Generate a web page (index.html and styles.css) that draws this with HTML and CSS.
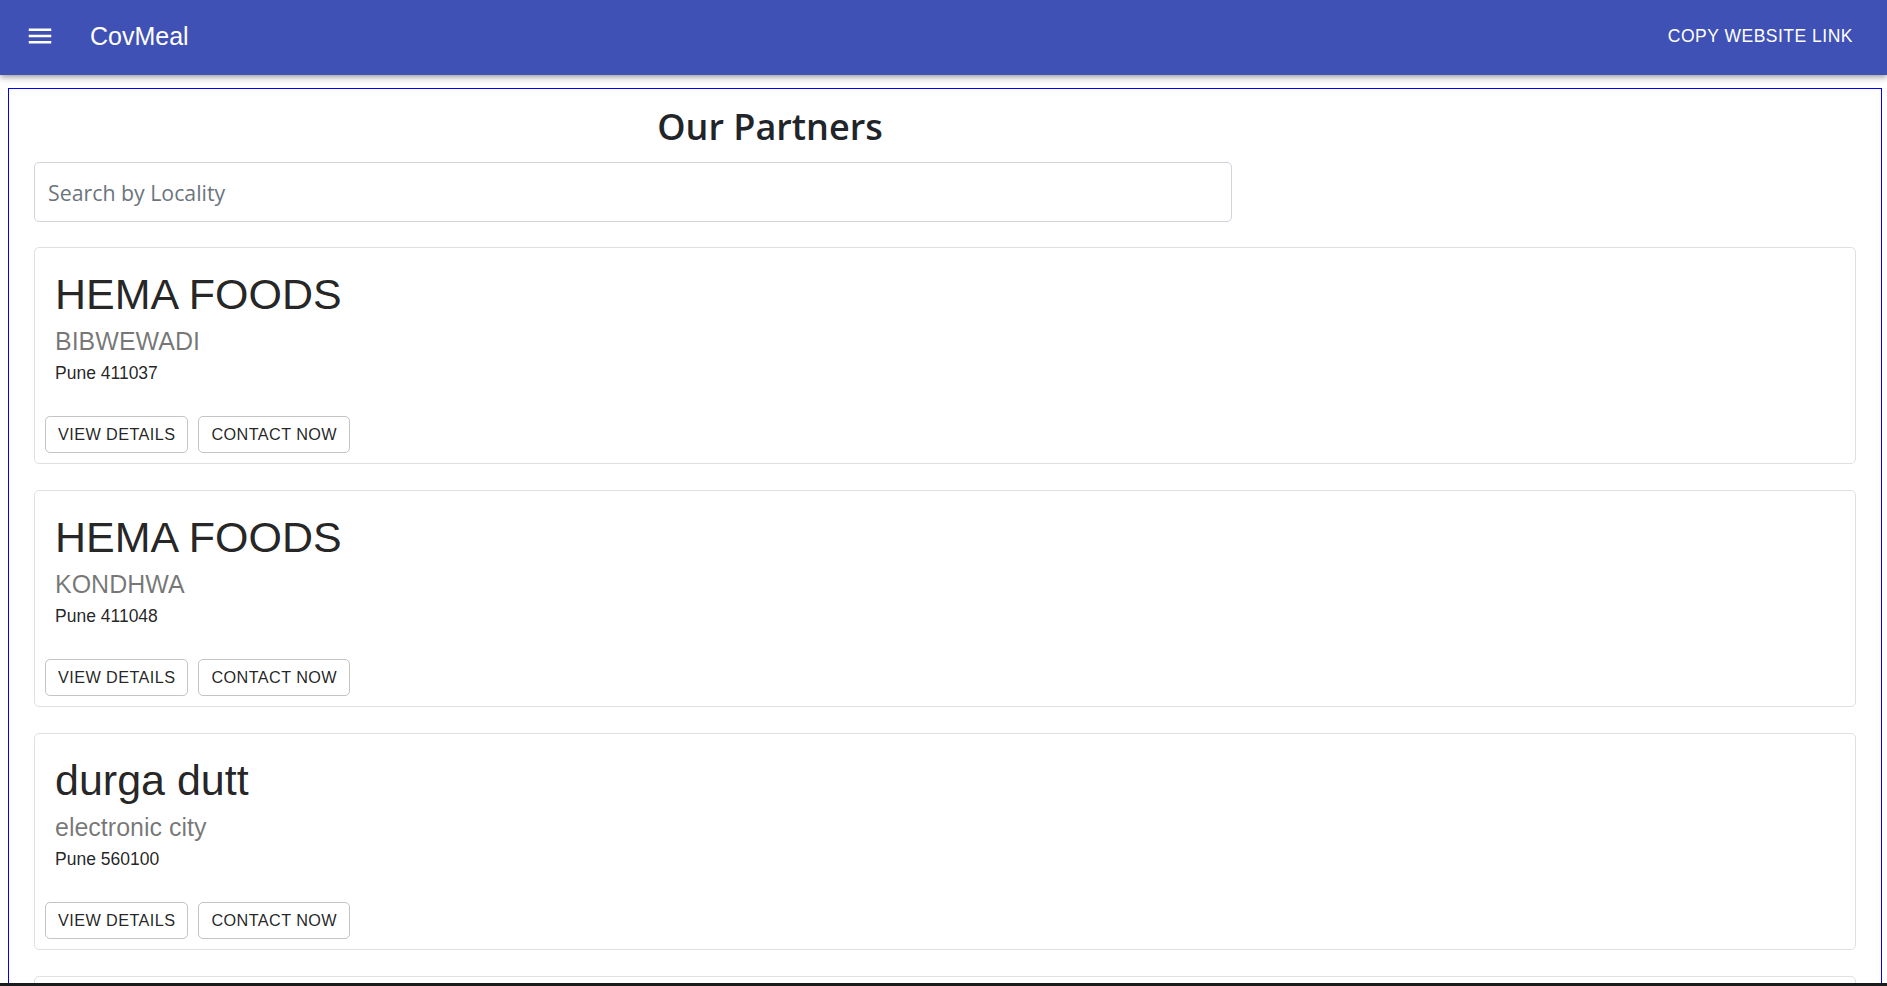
FILE: index.html
```html
<!DOCTYPE html>
<html lang="en">
  <head>
    <meta charset="UTF-8" />
    <meta name="viewport" content="width=device-width, initial-scale=1.0" />
    <title>CovMeal</title>
    <link rel="stylesheet" href="styles.css">
  </head>
  <body>
    <header class="appbar">
      <button class="menu-btn" aria-label="menu">
        <svg viewBox="0 0 24 24" width="30" height="30"><path fill="#fff" d="M3 18h18v-2H3v2zm0-5h18v-2H3v2zm0-7v2h18V6H3z"/></svg>
      </button>
      <h6 class="brand">CovMeal</h6>
      <button class="copy-btn">Copy Website Link</button>
    </header>

    <main class="container">
      <div class="top">
        <h3 class="page-title">Our Partners</h3>
      </div>
      <input class="search" type="text" placeholder="Search by Locality" />

      <div class="partners">
        <article class="card">
          <div class="card__content">
            <h4 class="card__name">HEMA FOODS</h4>
            <h6 class="card__area">BIBWEWADI</h6>
            <p class="card__city">Pune 411037</p>
          </div>
          <div class="card__actions">
            <button class="btn-outline">View Details</button>
            <button class="btn-outline">Contact Now</button>
          </div>
        </article>

        <article class="card">
          <div class="card__content">
            <h4 class="card__name">HEMA FOODS</h4>
            <h6 class="card__area">KONDHWA</h6>
            <p class="card__city">Pune 411048</p>
          </div>
          <div class="card__actions">
            <button class="btn-outline">View Details</button>
            <button class="btn-outline">Contact Now</button>
          </div>
        </article>

        <article class="card">
          <div class="card__content">
            <h4 class="card__name">durga dutt</h4>
            <h6 class="card__area">electronic city</h6>
            <p class="card__city">Pune 560100</p>
          </div>
          <div class="card__actions">
            <button class="btn-outline">View Details</button>
            <button class="btn-outline">Contact Now</button>
          </div>
        </article>

        <!-- next card, still loading -->
        <article class="card card--empty"></article>
      </div>
    </main>
    <div class="window-edge"></div>
  </body>
</html>
```

FILE: styles.css
```css
body {
  margin: 0;
  font-family: "Liberation Sans", Arial, sans-serif;
  background: #fff;
}

/* top bar */
.appbar {
  height: 75px;
  box-sizing: border-box;
  padding: 0 34px 4px 25px;
  display: flex;
  align-items: center;
  background-color: #3f51b5;
  color: white;
  box-shadow: 0px 2px 4px -1px rgba(0,0,0,0.2), 0px 4px 5px 0px rgba(0,0,0,0.14), 0px 1px 10px 0px rgba(0,0,0,0.12);
}
.menu-btn {
  border: none;
  background: none;
  padding: 0;
  width: 30px;
  height: 30px;
  display: flex;
  cursor: pointer;
}
.brand {
  margin: 0 0 0 35px;
  font-size: 25px;
  font-weight: 400;
  line-height: 40px;
  flex: 1;
}
.copy-btn {
  border: none;
  background: none;
  padding: 0;
  color: white;
  font-family: inherit;
  font-size: 17.5px;
  line-height: 30px;
  letter-spacing: 0.5px;
  text-transform: uppercase;
  cursor: pointer;
}

/* page */
.container {
  margin: 13px 5px 0 8px;
  border: 1px solid blue;
  border-bottom: none;
  padding: 0 25px;
}
.top {
  width: 1472px;
  text-align: center;
}
.page-title {
  margin: 17px 0 14px;
  font-family: "Open Sans", "Segoe UI", sans-serif;
  font-size: 36px;
  font-weight: 600;
  line-height: 42px;
  color: #212529;
}
.search {
  display: block;
  box-sizing: border-box;
  width: 1198px;
  height: 60px;
  padding: 0 13px;
  border: 1px solid #ced4da;
  border-radius: 5px;
  font-family: "Open Sans", "Segoe UI", sans-serif;
  font-size: 21.3px;
  color: #495057;
}
.search::placeholder {
  color: #6c757d;
}

.partners {
  margin-top: 25px;
}
.card {
  border: 1px solid #e0e0e0;
  border-radius: 5px;
  margin-bottom: 26px;
}
.card--empty {
  height: 215px;
}
.card__content {
  padding: 20px 20px 20px;
}
.card__name {
  margin: 0;
  font-size: 43px;
  font-weight: 400;
  line-height: 53px;
  color: rgba(0,0,0,0.87);
}
.card__area {
  margin: 0;
  font-size: 25px;
  font-weight: 400;
  line-height: 40px;
  color: rgba(0,0,0,0.54);
}
.card__city {
  margin: 0;
  font-size: 17.5px;
  line-height: 25px;
  color: rgba(0,0,0,0.87);
}
.card__actions {
  display: flex;
  gap: 10px;
  padding: 10px;
}
.btn-outline {
  height: 37px;
  padding: 0 12px;
  border: 1px solid rgba(0,0,0,0.23);
  border-radius: 5px;
  background: transparent;
  font-family: inherit;
  font-size: 16.25px;
  letter-spacing: 0.4px;
  text-transform: uppercase;
  color: rgba(0,0,0,0.87);
  cursor: pointer;
}

.window-edge {
  position: fixed;
  left: 0;
  right: 0;
  bottom: 0;
  height: 3px;
  background: #1b1b1b;
}
```
